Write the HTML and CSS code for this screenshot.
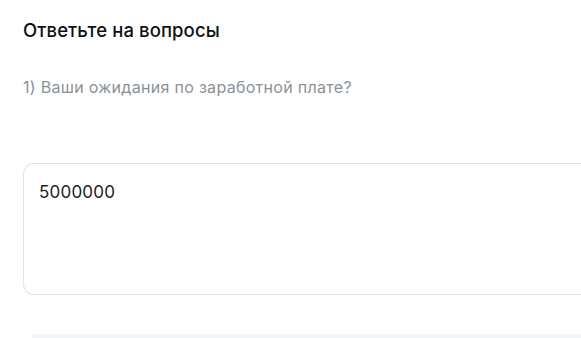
FILE: index.html
```html
<!DOCTYPE html>
<html lang="ru">
<head>
<meta charset="utf-8">
<link rel="stylesheet" href="styles.css">
</head>
<body>
<main class="page">
  <h2 class="title">Ответьте на вопросы</h2>
  <p class="question">1) Ваши ожидания по заработной плате?</p>
  <div class="answer">5000000</div>
  <div class="footer-bar"></div>
</main>
</body>
</html>
```
FILE: styles.css
```css
html, body {
  margin: 0;
  padding: 0;
  background: #ffffff;
  overflow: hidden;
}
.page {
  width: 581px;
  height: 338px;
  padding: 0 0 0 23px;
  box-sizing: border-box;
  font-family: Inter, "Noto Sans", sans-serif;
  display: flex;
  flex-direction: column;
  overflow: hidden;
}
.title {
  margin: 18px 0 0 0;
  font-size: 18.5px;
  line-height: 24px;
  font-weight: 500;
  color: #111111;
  letter-spacing: 0.1px;
}
.question {
  margin: 35px 0 0 0;
  font-size: 16px;
  line-height: 20px;
  font-weight: 400;
  color: #8b9198;
  letter-spacing: 0.3px;
}
.answer {
  flex: none;
  margin: 66px 0 0 0;
  height: 132px;
  box-sizing: border-box;
  border: 1px solid #e3e4e6;
  border-right: none;
  border-radius: 11px 0 0 11px;
  padding: 16px 15px;
  font-size: 17px;
  line-height: 24px;
  color: #222222;
  letter-spacing: 0.2px;
}
.footer-bar {
  flex: none;
  margin: 39px 0 0 9px;
  height: 10px;
  background: #f4f5f6;
}
```
